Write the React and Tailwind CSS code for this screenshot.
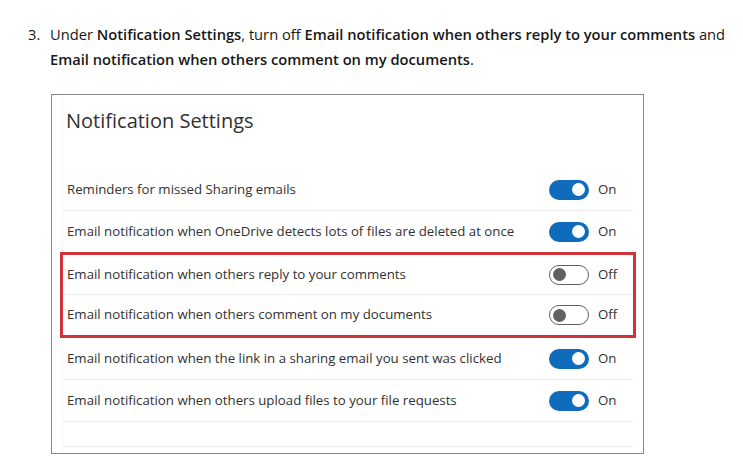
const ROWS = [
  { label: 'Reminders for missed Sharing emails', on: true },
  { label: 'Email notification when OneDrive detects lots of files are deleted at once', on: true },
  { label: 'Email notification when others reply to your comments', on: false, hl: true },
  { label: 'Email notification when others comment on my documents', on: false, hl: true },
  { label: 'Email notification when the link in a sharing email you sent was clicked', on: true },
  { label: 'Email notification when others upload files to your file requests', on: true },
]

const Toggle = ({ on }) => (
  <div className="flex items-center gap-[9px] w-[84px] shrink-0">
    {on ? (
      <div className="w-[40px] h-[20px] rounded-full bg-[#0f6cbd] flex items-center justify-end pr-[4px]">
        <div className="w-[13px] h-[13px] rounded-full bg-white" />
      </div>
    ) : (
      <div className="w-[40px] h-[20px] rounded-full border border-[#616161] bg-white flex items-center pl-[3px]">
        <div className="w-[13px] h-[13px] rounded-full bg-[#616161]" />
      </div>
    )}
    <span className="text-[13.25px] text-[#323130]">{on ? 'On' : 'Off'}</span>
  </div>
)

const Row = ({ label, on }) => (
  <div className="h-[42px] flex items-center justify-between pl-[4px] border-b border-[#ededed]">
    <span className="text-[13.25px] text-[#323130]">{label}</span>
    <Toggle on={on} />
  </div>
)

const App = () => {
  const top = ROWS.slice(0, 2)
  const hl = ROWS.slice(2, 4)
  const rest = ROWS.slice(4)

  return (
    <div className="w-[743px] h-[475px] bg-white overflow-hidden" style={{ fontFamily: '"Open Sans", "Noto Sans", sans-serif' }}>
      <div className="flex pt-[22px] pl-[28px] text-[14.7px] leading-[25px] text-[#171717]">
        <span className="w-[22px] shrink-0">3.</span>
        <p>
          Under <span className="font-semibold">Notification Settings</span>, turn off{' '}
          <span className="font-semibold">Email notification when others reply to your comments</span> and{' '}
          <span className="font-semibold">Email notification when others comment on my documents</span>.
        </p>
      </div>

      <div className="ml-[51px] mt-[22px] w-[593px] h-[360px] border border-[#8a8886] px-[10px]">
        <div className="h-full border-l border-[#f7f7f7]">
          <h2 className="pl-[3px] pt-[11px] h-[74px] text-[20px] text-[#323130]">Notification Settings</h2>
          {top.map((r) => <Row key={r.label} {...r} />)}
          <div className="border-[3px] border-[#d13438] -mx-[3px] -mt-[1px]">
            {hl.map((r, i) => (
              <div key={r.label} className={`h-[40px] flex items-center justify-between pl-[4px] ${i === 0 ? 'border-b border-[#ededed]' : ''}`}>
                <span className="text-[13.25px] text-[#323130]">{r.label}</span>
                <Toggle on={r.on} />
              </div>
            ))}
          </div>
          {rest.map((r) => <Row key={r.label} {...r} />)}
          <div className="h-[25px] border-b border-[#ededed]" />
        </div>
      </div>
    </div>
  )
}

export default App
